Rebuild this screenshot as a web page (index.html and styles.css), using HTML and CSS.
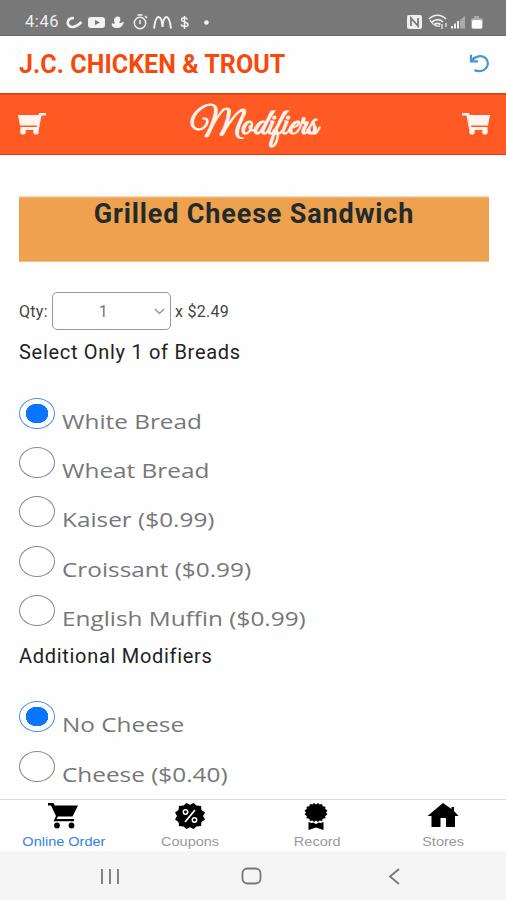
FILE: index.html
```html
<!DOCTYPE html>
<html lang="en">
<head>
    <meta charset="UTF-8">
    <meta name="viewport" content="width=device-width, initial-scale=1.0">
    <title>J.C. Chicken &amp; Trout</title>
    <link rel="stylesheet" href="styles.css">
</head>
<body>
    <!-- Status bar -->
    <div class="status-bar">
        <span class="clock">4:46</span>
        <svg class="status-icons" width="150" height="18" viewBox="0 0 150 18" fill="none" stroke="#f2f2f2">
            <path d="M8 5C0 5 0 13.500 6 14c4 .3 7-2.500 9.500-5" stroke-width="2.600"/>
            <rect x="22" y="4" width="17" height="11" rx="3" fill="#f2f2f2" stroke="none"/>
            <path d="M29 7l5 2.500-5 2.500z" fill="#777" stroke="none"/>
            <path d="M52 3.500c3 0 3 4 1 6 2 1 3 0 5-1-1 5-4 7-8 6.500-3-.5-5-2-4-5 1 1 2 1 3 0-2-2-1-6.500 3-6.500z" fill="#f2f2f2" stroke="none"/>
            <circle cx="74" cy="10" r="5.700" stroke-width="1.500"/>
            <path d="M71.500 2h5M74 7v4M79 3l2 2" stroke-width="1.500"/>
            <path d="M88 15.500C89 8 90 4 92.500 4S96 8 96.500 14C97 8 98 4 100.500 4S104 8 105 15.500" stroke-width="1.900"/>
            <path d="M121.500 6.500c-1-2.500-6-2.500-6 0 0 3 6.500 2 6.500 5 0 2.500-6 2.800-7 0M118.500 3v13" stroke-width="1.500"/>
            <circle cx="140.500" cy="9.500" r="2.300" fill="#f2f2f2" stroke="none"/>
        </svg>
        <svg class="system-icons" width="78" height="18" viewBox="0 0 78 18" fill="none" stroke="#eee">
            <rect x="1" y="2" width="15" height="14" rx="2" fill="#eee" stroke="none"/>
            <path d="M5 13V5l7 8V5" stroke="#777" stroke-width="1.700"/>
            <path d="M23 6c5-5 12-5 17 0M26 9c4-3 8-3 11 0M28.500 11.500c2-1.500 4-1.500 6 0" stroke-width="1.600"/>
            <path d="M24 7c3 5 6 7 10 6M36 11v5M40 10v4" stroke-width="1.300"/>
            <path d="M46 15.500v-2.500M49 15.500v-5M52 15.500V8" stroke-width="2"/>
            <path d="M54 15.500V7l5-4v12.500z" fill="#aaa" stroke="none"/>
            <path d="M68 3h5v2h2q2 0 2 2v6q0 3-3 3h-7q-2 0-2-3V7q0-2 3-2z" fill="#aaa" stroke="none"/>
            <rect x="66" y="7" width="10" height="8.500" rx="1.500" fill="#fff" stroke="none"/>
        </svg>
    </div>

    <!-- Store header -->
    <div class="store-header">
        <h1 class="store-name">J.C. CHICKEN &amp; TROUT</h1>
        <svg class="refresh" width="21" height="19" viewBox="0 0 21 19" fill="none" stroke="#4795dc" stroke-width="2.200">
            <path d="M3 6C8 1 14 1 17 4.500c4 5 1 11-5 12.500-3 .5-5 0-6.500-1"/>
            <path d="M2 .800v6.500h7M2 7l4-3.500"/>
        </svg>
    </div>

    <!-- Page title bar -->
    <div class="title-bar">
        <svg class="cart flip" width="28" height="22" viewBox="0 0 28 22">
            <path d="M0 0h6.500l1.300 2H28l-2 10.500H9l.3 1.500h16.200v3H7.300L4.500 2.500H0z"/>
            <circle cx="10" cy="18.800" r="2.800"/><circle cx="23" cy="18.800" r="2.800"/>
        </svg>
        <span class="page-title">Modifiers</span>
        <svg class="cart" width="28" height="22" viewBox="0 0 28 22">
            <path d="M0 0h6.500l1.300 2H28l-2 10.500H9l.3 1.500h16.200v3H7.300L4.500 2.500H0z"/>
            <circle cx="10" cy="18.800" r="2.800"/><circle cx="23" cy="18.800" r="2.800"/>
        </svg>
    </div>

    <div class="content">
        <div class="item-banner">
            <h2>Grilled Cheese Sandwich</h2>
        </div>

        <div class="qty-row">
            <span>Qty:</span>
            <div class="qty-select">
                <span class="qty-value">1</span>
                <svg width="11" height="7" viewBox="0 0 11 7" fill="none" stroke="#888" stroke-width="1.200"><path d="M1 1l4.500 4.500L10 1"/></svg>
            </div>
            <span class="price">x $2.49</span>
        </div>

        <h3 class="group-title breads">Select Only 1 of Breads</h3>
        <div class="options">
            <div class="option"><span class="radio checked"></span><span class="label">White Bread</span></div>
            <div class="option"><span class="radio"></span><span class="label">Wheat Bread</span></div>
            <div class="option"><span class="radio"></span><span class="label">Kaiser ($0.99)</span></div>
            <div class="option"><span class="radio"></span><span class="label">Croissant ($0.99)</span></div>
            <div class="option"><span class="radio"></span><span class="label">English Muffin ($0.99)</span></div>
        </div>

        <h3 class="group-title">Additional Modifiers</h3>
        <div class="options">
            <div class="option"><span class="radio checked"></span><span class="label">No Cheese</span></div>
            <div class="option"><span class="radio"></span><span class="label">Cheese ($0.40)</span></div>
        </div>
    </div>

    <!-- Bottom tabs -->
    <div class="tabs">
        <div class="tab active">
            <svg width="30" height="26" viewBox="0 0 30 26">
                <path d="M0 0h5.500l1.300 2.500H30l-5.500 11H10L8.500 16H26v2.200H5.500L8 13 3 2.500H0z"/>
                <circle cx="9" cy="22.500" r="2.900"/><circle cx="23.500" cy="22.500" r="2.900"/>
            </svg>
            <span>Online Order</span>
        </div>
        <div class="tab">
            <svg width="30" height="26" viewBox="0 0 30 26">
                <path d="M15 1.800L18.500 0l3 2.500 4.500.5.500 4 3.500 2.500L28 13l2 3.500-3.500 2.500-.5 4-4.500.5-3 2.500-3.500-1.800-3.500 1.800-3-2.500L4 23l-.5-4L0 16.500 2 13 0 9.500 3.500 7 4 3l4.500-.5 3-2.500z"/>
                <path d="M20 7l-10 12" fill="none" stroke="#fff" stroke-width="1.800"/>
                <circle cx="10.500" cy="9" r="2.200" fill="none" stroke="#fff" stroke-width="1.500"/><circle cx="19.500" cy="17" r="2.200" fill="none" stroke="#fff" stroke-width="1.500"/>
            </svg>
            <span>Coupons</span>
        </div>
        <div class="tab">
            <svg width="24" height="27" viewBox="0 0 24 27">
                <path d="M12 1.500L14 0l1.500 1.500L18 1l.8 2.300 2.700.4-.3 2.300L23.500 7.500 22 9.500l1.500 2-2.300 1.500.3 2.300-2.700.4L18 18l-2.500-.5L14 19l-2-1.500L10 19l-1.500-1.500L6 18l-.8-2.300-2.700-.4.3-2.300L.5 11.500 2 9.500.5 7.500 2.800 6l-.3-2.300 2.700-.4L6 1l2.500.5L10 0z"/>
                <path d="M4.500 19l3 1 1.500-.5 3 1.500 3-1.500 1.500.5 3-1v8L12 24.500 4.500 27z"/>
            </svg>
            <span>Record</span>
        </div>
        <div class="tab">
            <svg width="32" height="24" viewBox="0 0 32 24">
                <path d="M16 0l8.500 6V4H27v4l4.500 5H28v11h-9v-9h-5.500v9h-9V13H.5z"/>
            </svg>
            <span>Stores</span>
        </div>
    </div>

    <!-- Android navigation -->
    <div class="nav-bar">
        <svg width="20" height="17" viewBox="0 0 20 17"><path d="M2 1v15M10 1v15M18 1v15"/></svg>
        <svg width="21" height="18" viewBox="0 0 21 18"><rect x="1.500" y="1.500" width="18" height="15" rx="5"/></svg>
        <svg width="12" height="17" viewBox="0 0 12 17"><path d="M11 1L2 8.500l9 7.500"/></svg>
    </div>
</body>
</html>
```
FILE: styles.css
```css
* {
    box-sizing: border-box;
}
body {
    margin: 0;
    height: 900px;
    display: flex;
    flex-direction: column;
    overflow: hidden;
    background-color: #fefefe;
    font-family: Roboto, sans-serif;
}
h1, h2, h3 {
    margin: 0;
}
.status-bar {
    height: 36px;
    padding: 9px 22px 0 25px;
    display: flex;
    align-items: center;
    background-color: #787878;
    border-bottom: 1px solid #6a6a6a;
    color: #eee;
}
.clock {
    width: 41px;
    font-size: 16.5px;
    letter-spacing: 0.6px;
}
.status-icons {
    flex: none;
}
.system-icons {
    margin-left: auto;
}
.store-header {
    height: 57px;
    padding: 0 16px 0 19px;
    display: flex;
    align-items: center;
    justify-content: space-between;
}
.store-name {
    padding-top: 1px;
    font-size: 25px;
    font-weight: bold;
    color: #f8480c;
    letter-spacing: 0.05px;
}
.refresh {
    margin-bottom: 2px;
}
.title-bar {
    height: 62.5px;
    padding: 0 16px 0 18px;
    display: flex;
    align-items: center;
    justify-content: space-between;
    background-color: #ff5a23;
    border-top: 2px solid #d9480f;
    border-bottom: 1px solid #d8380c;
}
.cart {
    fill: #fff4ee;
}
.flip {
    transform: scaleX(-1);
}
.page-title {
    padding: 3px 0 0 1px;
    font-family: "Great Vibes", "Liberation Serif", cursive;
    font-size: 35px;
    color: #fff4ee;
    -webkit-text-stroke: 1.2px #fff4ee;
    transform: scaleX(1.075);
}
.content {
    flex: 1;
    padding: 41.5px 17px 0 19px;
}
.item-banner {
    height: 65px;
    margin-top: -0.5px;
    border-top: 1px solid #f3bf87;
    background-color: #eea14e;
    text-align: center;
    transform: translateY(0.7px);
}
.item-banner h2 {
    font-size: 27px;
    line-height: 32px;
    letter-spacing: 0.85px;
    color: #222b2b;
}
.qty-row {
    height: 38px;
    margin-top: 31.5px;
    display: flex;
    align-items: center;
    font-size: 16px;
    letter-spacing: 0.3px;
    color: #444;
}
.qty-select {
    width: 119px;
    height: 38px;
    margin: 0 4px 0 4px;
    padding-right: 5px;
    display: flex;
    align-items: center;
    border: 1px solid #999;
    border-radius: 5px;
}
.qty-value {
    flex: 1;
    text-align: center;
    color: #777;
}
.group-title {
    height: 43px;
    font-size: 20px;
    line-height: 24px;
    font-weight: normal;
    letter-spacing: 0.7px;
    color: #222;
}
.breads {
    margin-top: 10px;
}
.options {
    padding-top: 14.5px;
    margin-bottom: -0.5px;
}
.option {
    height: 49.3px;
    display: flex;
}
.radio {
    width: 36px;
    height: 31px;
    flex: none;
    border: 1px solid #888;
    border-radius: 50%;
}
.radio.checked {
    border-color: #4d8df5;
    background: radial-gradient(ellipse 11.5px 10px, #0a75ff 96%, #fff 100%);
}
.label {
    margin: 9px 0 0 7px;
    font-family: "Open Sans", sans-serif;
    font-size: 20.5px;
    line-height: 28px;
    white-space: nowrap;
    color: #777;
    transform: scaleX(1.187);
    transform-origin: left;
}
.tabs {
    height: 52px;
    display: grid;
    grid-template-columns: repeat(4, 1fr);
    background-color: #fff;
    border-top: 1px solid #ddd;
}
.tab {
    padding-top: 3px;
    display: flex;
    flex-direction: column;
    align-items: center;
    justify-content: space-between;
    font-family: "Liberation Sans", sans-serif;
    font-size: 12.5px;
    line-height: 18px;
    color: #999;
}
.tab span {
    padding-left: 1px;
    transform: scaleX(1.16);
}
.active {
    color: #3080f0;
}
.nav-bar {
    height: 49px;
    padding: 1px 106px 0 100px;
    display: flex;
    align-items: center;
    justify-content: space-between;
    background-color: #f5f5f5;
    fill: none;
    stroke: #777;
    stroke-width: 1.8px;
}
.nav-bar rect {
    transform: translateX(-3px);
}
.nav-bar svg {
    overflow: visible;
}
```
